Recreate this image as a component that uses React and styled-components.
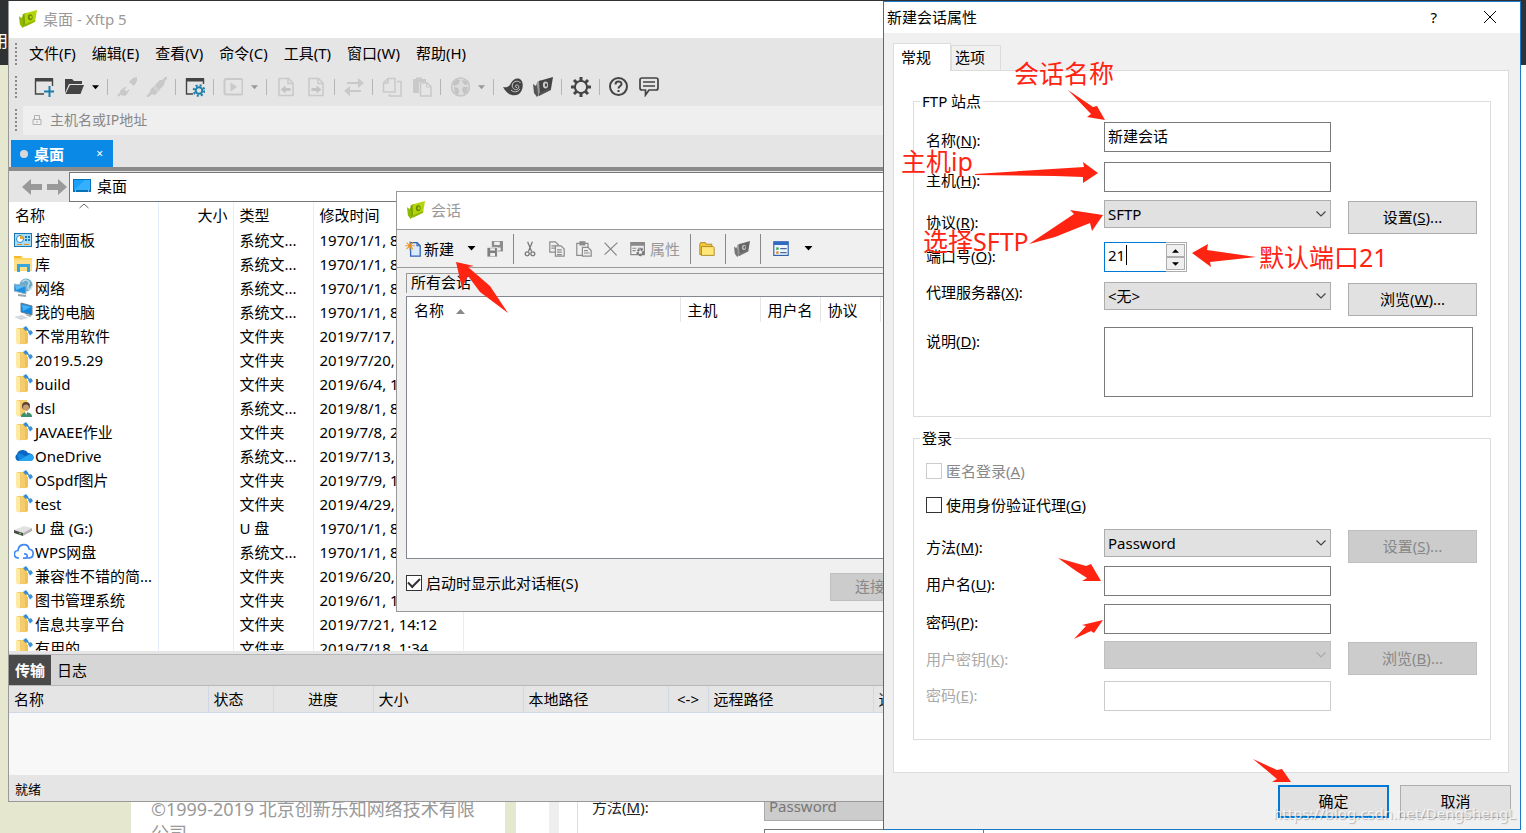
import React from "react";
import styled, { createGlobalStyle, css } from "styled-components";

const GlobalStyle = createGlobalStyle`
  * {
    box-sizing: border-box;
  }
  body {
    margin: 0;
    font-family: "Noto Sans", "Noto Sans CJK SC", sans-serif;
    font-size: 15px;
    line-height: 20px;
    color: #000;
  }
  button, input, select, textarea {
    font: inherit;
    color: inherit;
    border-radius: 0;
    outline: none;
  }
  table {
    border-collapse: collapse;
    table-layout: fixed;
    width: 100%;
  }
  th, td {
    padding: 0;
    font-weight: normal;
    text-align: left;
    white-space: nowrap;
  }
`;

/* ---------- icons ---------- */

const Svg = ({ size = 20, children, ...rest }) => (
  <svg width={size} height={size} viewBox="0 0 20 20" fill="none" {...rest}>
    {children}
  </svg>
);

const XftpLogo = ({ size = 18, light = "#b5d40b", mid = "#8fb800", dark = "#79a300", mark = "#5f8a00" }) => (
  <Svg size={size}>
    <path d="M0 7l3 2 1-3 2 12-2 2-3-4z" fill={mid} />
    <path d="M4 5l4-2-1 14-2 1z" fill={dark} />
    <path d="M6 4l14-4-2 12-11 5z" fill={light} />
    <path d="M6 16l12-5v2L6 19z" fill={mid} />
    <ellipse cx="12.500" cy="8" rx="2.600" ry="3.400" fill={mark} />
    <ellipse cx="13" cy="8" rx="1.200" ry="1.800" fill={light} />
  </Svg>
);

const NewWindowIcon = () => (
  <Svg>
    <path d="M10 17H1.5V2H18.5V9" stroke="#444" strokeWidth="1.4" />
    <path d="M1 1h18v3.500H1z" fill="#444" />
    <path d="M15.500 9v11M10 14.500h10" stroke="#1c7eaa" strokeWidth="2" />
  </Svg>
);

const OpenFolderIcon = () => (
  <Svg>
    <path d="M1 16V2h7l2 2h8v3H5z" fill="#444" />
    <path d="M6 8h14l-3.500 9H1.500z" fill="#444" />
    <path d="M5.500 7.500H19" stroke="#e5e5e5" strokeWidth="1" />
  </Svg>
);

const UnplugIcon = () => (
  <Svg>
    <path d="M1 19l3-3" stroke="#c8c8c8" strokeWidth="2" />
    <path d="M3 14l3-3 5 5-3 3-4-1z" fill="#c8c8c8" />
    <path d="M7 12l2-2M10 15l2-2" stroke="#c8c8c8" strokeWidth="1.6" />
    <path d="M16 1l4-1v4l-3 5-5-4z" fill="#c8c8c8" />
  </Svg>
);

const PlugIcon = () => (
  <Svg>
    <path d="M0 20l5-5M15 5l5-5" stroke="#c8c8c8" strokeWidth="2.500" />
    <path d="M3 13l3-3 5 5-3 3-4-1z" fill="#c8c8c8" />
    <path d="M8 8l5-5 5 0-1 5-5 5z" fill="#c8c8c8" />
    <path d="M7 9l5 5" stroke="#c8c8c8" strokeWidth="1.400" />
  </Svg>
);

const WindowGearIcon = () => (
  <Svg>
    <path d="M8 17H1.500V2H18.500V7" stroke="#444" strokeWidth="1.4" />
    <path d="M1 1h18v3.500H1z" fill="#444" />
    <circle cx="14" cy="13.500" r="3.300" stroke="#1c7eaa" strokeWidth="2" />
    <circle cx="14" cy="13.500" r="5.300" stroke="#1c7eaa" strokeWidth="2" strokeDasharray="2.100 2.060" />
  </Svg>
);

const PlayIcon = () => (
  <Svg>
    <rect x="1.500" y="2" width="18" height="15.500" rx="2" stroke="#c9c9c9" strokeWidth="2" />
    <path d="M7.500 5.500v9l6.500-4.500z" fill="#c9c9c9" />
  </Svg>
);

const PageIcon = ({ flip }) => (
  <Svg>
    <path d="M3 1.500h9.500l4.500 4.500v12.500H3z" stroke="#cacaca" strokeWidth="1.600" />
    <path d="M12 1.500V6.500h5" stroke="#cacaca" strokeWidth="1.400" />
    <path
      d={flip ? "M5.500 11h5V8.500l5 4-5 4V14h-5z" : "M14.500 11h-5V8.500l-5 4 5 4V14h5z"}
      fill="#c4c4c4"
    />
  </Svg>
);

const SwapIcon = () => (
  <Svg>
    <path d="M3 6h12M5 14h12" stroke="#c9c9c9" strokeWidth="2" />
    <path d="M14 1l6 5-6 5zM6 9l-6 5 6 5z" fill="#c9c9c9" />
  </Svg>
);

const CopyPagesIcon = () => (
  <Svg>
    <path d="M6 1.500h7V15H1.500V6zM6 1.500V6H1.500" stroke="#c9c9c9" strokeWidth="1.500" />
    <path d="M15 4.500h4V19H7.500v-2" stroke="#c9c9c9" strokeWidth="1.500" />
  </Svg>
);

const PastePagesIcon = () => (
  <Svg>
    <path d="M1 2h3V0.500h6V2h4v3H7v11H1z" fill="#c9c9c9" />
    <path d="M8.500 6h6.500l4 3.500V19H8.500z" stroke="#c9c9c9" strokeWidth="1.500" fill="#e5e5e5" />
    <path d="M14.500 6v4H19" stroke="#c9c9c9" />
  </Svg>
);

const GlobeIcon = () => (
  <Svg>
    <circle cx="10.500" cy="10" r="9" stroke="#c6c6c6" strokeWidth="1.500" fill="#dcdcdc" />
    <path d="M3 6l4-4 3 1-1 3-2 2-3 1zM4 10l4 1 1 3-1 4-3-2zM12 3l4 1 2 3-3 1-2-2zM13 10l5 0-1 5-3 2-2-4z" fill="#c3c3c3" />
  </Svg>
);

const ShellIcon = () => (
  <Svg>
    <path d="M0 10c3 1 6 0 8-4 2-4 7-6 10-3s2 11-2 14c-5 3-12 1-16-7z" fill="#444" />
    <path
      d="M17.500 6c-2-3-7-2-8 1s1 6 4 5.500 3-4.500.5-4.500-2 3 0 2.500M8 13c3 3 7 2 9-1"
      stroke="#c9c9c9"
      strokeWidth="1"
    />
  </Svg>
);

const GearIcon = () => (
  <Svg>
    <circle cx="10" cy="10" r="6" stroke="#444" strokeWidth="2.200" />
    <path
      d="M10 0v4M10 16v4M0 10h4M16 10h4M3 3l3 3M14 14l3 3M3 17l3-3M14 6l3-3"
      stroke="#444"
      strokeWidth="3"
    />
    <circle cx="10" cy="10" r="4.800" fill="#e5e5e5" />
  </Svg>
);

const HelpIcon = () => (
  <Svg>
    <circle cx="9.500" cy="9.500" r="8.500" stroke="#444" strokeWidth="2" />
    <path d="M6.500 7.500c0-4 6-4 6-.5 0 2-3 2-3 4.500M9.500 13v2" stroke="#444" strokeWidth="2" />
  </Svg>
);

const ChatIcon = () => (
  <Svg>
    <path
      d="M3 1h14c1.500 0 2 .5 2 2v8c0 1.500-.5 2-2 2h-7l-3.500 5v-5H3c-1.500 0-2-.5-2-2V3c0-1.500.5-2 2-2z"
      stroke="#444"
      strokeWidth="1.700"
    />
    <path d="M4 5h12M4 9h12" stroke="#444" strokeWidth="1.400" />
  </Svg>
);

const Triangle = ({ color = "#000", w = 7 }) => (
  <svg width={w} height="5" viewBox="0 0 8 5">
    <path d="M0 0h8L4 4.500z" fill={color} />
  </svg>
);

const LockIcon = () => (
  <svg width="10" height="12" viewBox="0 0 10 12" fill="none" stroke="#b0b0b0">
    <path d="M1 5.500h8v5H1zM2.500 5V1.500h5V5M5 7v2" />
  </svg>
);

const BackIcon = ({ flip }) => (
  <svg width="20" height="18" viewBox="0 0 20 18">
    <path
      d={flip ? "M20 9l-9-8v5H0v6h11v5z" : "M0 9l9-8v5h11v6H9v5z"}
      fill="#999"
    />
  </svg>
);

const MonitorIcon = () => (
  <svg width="18" height="14" viewBox="0 0 18 14">
    <rect width="18" height="13" fill="#0671b5" />
    <path d="M1 1h16v10H1z" fill="#18a0fb" />
    <path d="M1 11L12 1h5v10z" fill="#35b0ff" />
    <path d="M2 12h1M15 12h1" stroke="#fff" />
  </svg>
);

const FolderShape = () => (
  <>
    <path d="M3 2h10v16H3z" fill="#f4cd6a" />
    <path d="M2 2l4 1.500V19l-4-2z" fill="#ffe9a6" />
    <path d="M11 6l3 1v10l-3 1z" fill="#eec25a" />
  </>
);

const FileIcon = ({ kind }) => {
  switch (kind) {
    case "panel":
      return (
        <Svg>
          <rect x="0.500" y="3.500" width="17" height="13" fill="#a5dcf8" stroke="#1b78b5" />
          <circle cx="6" cy="9" r="3.500" fill="#fff" stroke="#2a8ccc" />
          <path d="M6 9V5.500A3.500 3.500 0 0 1 9.500 9z" fill="#f5a623" />
          <path d="M11 7h2M11 10h2M14 7h2M14 10h2" stroke="#1b78b5" strokeWidth="2" />
          <path d="M3 14.500h5M10 14.500h5" stroke="#e98b1f" />
        </Svg>
      );
    case "library":
      return (
        <Svg>
          <path d="M0 2h8l1 2h9v13H0z" fill="#ffd766" />
          <path d="M0 2h7v2H0z" fill="#f3b92c" />
          <path d="M0 6h18v10H0z" fill="#ffe08a" />
          <path d="M3 18v-8h13v8h-3v-5H6v5z" fill="#35a7dd" />
        </Svg>
      );
    case "network":
      return (
        <Svg>
          <circle cx="12" cy="7" r="6.500" fill="#6da9c9" />
          <path d="M8 4c3-3 6-2 7 0s-2 3-1 6 3 1 4-2" stroke="#b9dcec" strokeWidth="1.500" />
          <path d="M0 6l12 2v8L0 13z" fill="#1d8fdd" stroke="#9fb4c2" />
          <path d="M1 7l10 1.500L2 12z" fill="#5dbcf5" />
          <path d="M4 17l8 1" stroke="#9aa5ac" strokeWidth="2" />
        </Svg>
      );
    case "computer":
      return (
        <Svg>
          <path d="M7 1l11 3v9L7 10z" fill="#1287dc" stroke="#6f7f8c" />
          <path d="M8 2.500l9 2.500-8 4z" fill="#45b2f7" />
          <path d="M0 15l8-2 6 3-7 2z" fill="#d3d9de" />
          <path d="M11 12l6 1v2l-4-1z" fill="#a7afb5" />
        </Svg>
      );
    case "user":
      return (
        <Svg>
          <FolderShape />
          <circle cx="12" cy="8" r="4" fill="#5b4334" />
          <circle cx="12" cy="9.500" r="3" fill="#c79a78" />
          <path d="M7 19c0-6 10-6 11-1v1z" fill="#3f8f6f" />
          <path d="M11 13l1 4 2-4z" fill="#fff" />
        </Svg>
      );
    case "onedrive":
      return (
        <Svg>
          <path d="M4 15a4 4 0 0 1-1-7c1-4 8-6 11-1 4 0 6 3 5 6z" fill="#0a66c2" />
          <path d="M3 8c3-1 5 0 8 2l7-2c3 3 2 7-2 7H5z" fill="#1683dc" />
          <path d="M4 15l12-7c4 1 5 6 1 7z" fill="#27a5ee" />
        </Svg>
      );
    case "usb":
      return (
        <Svg>
          <path d="M0 12l10-4 8 2-9 5z" fill="#e2e2e2" />
          <path d="M0 12l9 3v3l-9-3z" fill="#4a4a4a" />
          <path d="M9 15l9-5v3l-9 5z" fill="#b5b5b5" />
          <path d="M5 15.500h2" stroke="#5cd04a" strokeWidth="1.500" />
        </Svg>
      );
    case "wps":
      return (
        <Svg>
          <path
            d="M5 16C-1 16-1 9 4 8.500 5 1 14 1 15 7c6 1 5 9 0 9H9M9 16c6 1 5-5 1-4"
            stroke="#3f86f7"
            strokeWidth="1.700"
          />
        </Svg>
      );
    default:
      return (
        <Svg>
          <FolderShape />
          <path d="M9 2l3-2 2.500 3-3 2z" fill="#3a8fd6" />
          <path d="M14 6l3-2 2 3-3 2.500z" fill="#3a8fd6" />
          <path d="M12 2.500l4 3.500" stroke="#3a8fd6" strokeWidth="1.500" />
        </Svg>
      );
  }
};

const NewDocIcon = () => (
  <Svg size={16}>
    <path d="M7 2h8l4 4v13H7z" fill="#dceafd" stroke="#2f62b5" strokeWidth="1.600" />
    <path d="M15 2v4h4" stroke="#2f62b5" strokeWidth="1.400" />
    <path d="M6 0v12M0 6h12M2 2l8 8M10 2l-8 8" stroke="#e8a33a" strokeWidth="1.400" />
    <circle cx="6" cy="6" r="2" fill="#f08b1d" />
  </Svg>
);

const SaveAllIcon = () => (
  <Svg size={16}>
    <path d="M6 0h14v13H6z" fill="#8c8c8c" />
    <path d="M9 1h7v4H9zM12 8h5v4h-5z" fill="#efefef" />
    <path d="M0 8h13v12H0z" fill="#808080" stroke="#efefef" />
    <path d="M4 9h6v3H4zM4 15h6v4H4z" fill="#efefef" />
  </Svg>
);

const CutIcon = () => (
  <Svg size={16} stroke="#777" strokeWidth="1.600">
    <path d="M7 1l5 12M13 1L8 13" />
    <circle cx="6.500" cy="16" r="2.500" />
    <circle cx="13.500" cy="16" r="2.500" />
  </Svg>
);

const CopyIcon = () => (
  <Svg size={16} stroke="#8c8c8c" strokeWidth="1.500">
    <path d="M1 1h7l4 4v9H1zM3 6h6M3 9h6" />
    <path d="M8 6h7l4 4v9H8z" fill="#efefef" />
    <path d="M10 11h6M10 14h6M10 17h6" />
  </Svg>
);

const PasteIcon = () => (
  <Svg size={16} stroke="#8c8c8c" strokeWidth="1.500">
    <path d="M1 3h14v15H1z" />
    <path d="M5 1h6v4H5z" fill="#8c8c8c" />
    <path d="M8 8h7l4 4v7H8z" fill="#efefef" />
    <path d="M10 12h5M10 15h7" />
  </Svg>
);

const DeleteIcon = () => (
  <Svg size={16} stroke="#888" strokeWidth="1.600">
    <path d="M2 2l15 16M18 2L2 17" />
  </Svg>
);

const PropsIcon = () => (
  <Svg size={16}>
    <path d="M1 2h17v15H1z" stroke="#8a8a8a" strokeWidth="1.500" />
    <path d="M1 2h17v4H1z" fill="#8a8a8a" />
    <path d="M3 9h5M3 12h4M10 9h6" stroke="#8a8a8a" strokeWidth="1.400" />
    <circle cx="13" cy="14" r="3.500" stroke="#7a7a7a" strokeWidth="3" strokeDasharray="3 1" />
  </Svg>
);

const SmallFolderIcon = () => (
  <Svg size={16}>
    <path d="M1 4l1-2h6l1 2h7v13H1z" fill="#f3c93c" stroke="#a37a10" />
    <path d="M3 7h15l1 1v10H3z" fill="#ffe679" stroke="#a37a10" />
  </Svg>
);

const ListIcon = () => (
  <Svg size={16}>
    <rect x="1" y="1" width="18" height="17" fill="#eef4fc" stroke="#2a5ba8" strokeWidth="1.400" />
    <path d="M1 1h18v4H1z" fill="#2f6bc4" />
    <path d="M4 8h3v3H4z" fill="#3aa545" />
    <path d="M4 13h3v3H4z" fill="#e3842a" />
    <path d="M9 9.500h8M9 14.500h8" stroke="#44699c" strokeWidth="1.500" />
  </Svg>
);

const Chevron = ({ color = "#444" }) => (
  <svg width="10" height="6" viewBox="0 0 10 6" fill="none">
    <path d="M0.500 0.500L5 5l4.500-4.500" stroke={color} strokeWidth="1.200" />
  </svg>
);

/* ---------- desktop and the page behind ---------- */

const Desktop = styled.div`
  position: relative;
  min-height: 100vh;
  overflow: hidden;
  background: #fff;
`;

const Backdrop = styled.div`
  position: absolute;
  inset: 0;
  display: flex;
  flex-direction: column;
`;

const BackdropBar = styled.div`
  height: 65px;
  padding-top: 31px;
  text-indent: -8px;
  font-size: 16px;
  color: #fff;
  background: #2f3133;
`;

const BackdropBody = styled.div`
  flex: 1;
  display: grid;
  grid-template-columns: 131px 374px 11px 33px 10px 19px 1fr;
  align-items: stretch;
  background: #fff;
`;

const Beige = styled.div`
  background: #e5e8cf;
`;

const Band = styled.div`
  background: #eee;
`;

const BlankStrip = styled.div`
  border-right: 1px solid #ddd;
`;

const Copyright = styled.p`
  align-self: end;
  height: 36px;
  margin: 0;
  padding: 0 20px;
  font-size: 18px;
  line-height: 24px;
  color: #999;
  overflow: hidden;
`;

const GhostForm = styled.div`
  align-self: end;
  display: grid;
  grid-template-columns: 172px 220px;
  align-items: start;
  row-gap: 8px;
  height: 38px;
  padding-left: 14px;
  overflow: hidden;
  color: #222;
`;

const GhostSelect = styled.div`
  height: 26px;
  padding-left: 4px;
  border: 1px solid #aaa;
  background: #ccc;
  color: #777;
`;

const GhostInput = styled.div`
  grid-column: 2;
  height: 20px;
  border: 1px solid #777;
`;

const GhostLabel = styled.span`
  padding-top: 2px;
`;

/* ---------- main Xftp window ---------- */

const MainWindow = styled.section`
  position: absolute;
  top: 1px;
  left: 8px;
  right: 200px;
  bottom: 31px;
  display: flex;
  flex-direction: column;
  border: 1px solid #999;
  border-top: none;
  background: #e5e5e5;
`;

const TitleBar = styled.header`
  flex: none;
  display: flex;
  align-items: center;
  gap: 6px;
  height: 37px;
  padding: 0 0 2px 10px;
  background: #fff;
  color: #999;
`;

const BarRow = styled.div`
  flex: none;
  display: flex;
  align-items: center;
  height: ${(props) => props.$height}px;
`;

const Grip = styled.span`
  width: 2px;
  height: 23px;
  margin-left: 6px;
  background: repeating-linear-gradient(#8a8a8a 0 2px, transparent 2px 4px);
`;

const Menu = styled.nav`
  display: flex;
  gap: 16px;
  margin-left: 12px;
  padding-bottom: 2px;
`;

const PlainButton = styled.button`
  display: flex;
  align-items: center;
  gap: ${(props) => props.$gap || 0}px;
  padding: 0;
  border: none;
  background: none;
  white-space: nowrap;
`;

const Tools = styled.div`
  display: flex;
  align-items: center;
  margin-left: 8px;
`;

const ToolGroup = styled.div`
  display: flex;
  align-items: center;
  gap: 10px;
  height: 16px;
  padding: 0 8px 0 9px;
  border-right: 1px solid #b5b5b5;

  &:last-child {
    border-right: none;
  }
`;

const HostBox = styled.label`
  flex: 1;
  display: flex;
  align-items: center;
  gap: 8px;
  height: 29px;
  margin-left: 6px;
  padding-left: 9px;
  background: #efefef;
`;

const HostInput = styled.input`
  flex: 1;
  padding: 0;
  border: none;
  background: none;
  font-size: 14px;

  &::placeholder {
    color: #888;
    opacity: 1;
  }
`;

const TabStrip = styled.div`
  flex: none;
  height: 35px;
  padding: 4px 2px 0;
  border-bottom: 4px solid #8b8b8b;
`;

const SiteTab = styled.button`
  display: flex;
  align-items: center;
  gap: 6px;
  width: 102px;
  height: 27px;
  padding: 0 10px 0 9px;
  border: none;
  background: #0a8ae6;
  color: #fff;
  font-weight: bold;
`;

const Dot = styled.span`
  width: 8px;
  height: 8px;
  border-radius: 50%;
  background: #d8d8d8;
`;

const CloseMark = styled.span`
  margin-left: auto;
  font-size: 12px;
  font-weight: normal;
`;

const PathRow = styled.div`
  flex: none;
  display: flex;
  align-items: center;
  gap: 5px;
  height: 31px;
  padding: 1px 0 0 13px;
`;

const PathBox = styled.div`
  flex: 1;
  display: flex;
  align-items: center;
  gap: 6px;
  height: 30px;
  margin-left: -3px;
  padding: 0 0 2px 3px;
  border: 1px solid #777;
  background: #fff;
`;

const FileList = styled.div`
  flex: 1;
  min-height: 0;
  overflow: hidden;
  background: #fff;

  td, th {
    height: 24px;
    line-height: 24px;
    padding-left: 6px;
    border-right: 1px solid #e4eefa;
    overflow: hidden;
  }
  th {
    height: 26px;
    position: relative;
  }
  th:nth-child(2) {
    padding-right: 5px;
    text-align: right;
  }
  td:first-child {
    padding-left: 5px;
  }
`;

const SortMark = styled.svg`
  position: absolute;
  top: 1px;
  left: 70px;
`;

const NameCell = styled.span`
  display: flex;
  align-items: center;
  gap: 1px;
  height: 24px;

  svg {
    flex: none;
  }
`;

const LogTabs = styled.div`
  flex: none;
  display: flex;
  height: 32px;
  margin-top: 3px;
  border-top: 1px solid #b8b8b8;
  border-bottom: 1px solid #b8b8b8;
  background: #d6d6d6;
`;

const LogTab = styled.button`
  padding: 0 6px;
  border: none;
  background: ${(props) => (props.$active ? "#4a4a4a" : "none")};
  color: ${(props) => (props.$active ? "#fff" : "#000")};
  font-weight: ${(props) => (props.$active ? "bold" : "normal")};
`;

const TransferPane = styled.div`
  flex: none;
  height: 89px;
  background: #f8f8f8;

  th {
    height: 26px;
    padding-left: 5px;
    border-right: 1px solid #d0d8e6;
    border-bottom: 1px solid #d0d8e6;
    background: #e5e5e5;
    overflow: hidden;
  }
  th:nth-child(3), th:nth-child(6) {
    padding: 0;
    text-align: center;
  }
`;

const StatusBar = styled.footer`
  flex: none;
  height: 26px;
  padding-left: 6px;
  font-size: 13px;
  line-height: 28px;
`;

/* ---------- sessions window ---------- */

const SessionWindow = styled.section`
  position: absolute;
  top: 191px;
  left: 396px;
  right: 300px;
  border: 1px solid #999;
  background: #f0f0f0;
`;

const SessionTools = styled.div`
  display: flex;
  align-items: center;
  height: 39px;
  border-top: 1px solid #999;
  border-bottom: 1px solid #999;
`;

const SessionGroup = styled.div`
  display: flex;
  align-items: center;
  gap: 11px;
  height: 30px;
  padding: 0 10px 0 ${(props) => (props.$wide ? 12 : 8)}px;
  border-right: 1px solid #888;
  color: ${(props) => (props.$muted ? "#999" : "#000")};

  &:last-child {
    border-right: none;
  }
`;

const NewLabel = styled.span`
  margin-right: 10px;
`;

const AllSessions = styled.div`
  height: 20px;
  margin: 5px 0 3px 9px;
  padding-left: 4px;
  border-top: 1px solid #999;
  border-left: 1px solid #999;
  line-height: 16px;
`;

const SessionList = styled.div`
  height: 263px;
  margin-left: 9px;
  border: 1px solid #828790;
  background: #fff;

  th {
    height: 25px;
    padding-left: 7px;
    border-right: 1px solid #e5e5e5;
  }
  th svg {
    margin-left: 12px;
    vertical-align: middle;
  }
`;

const SessionFooter = styled.div`
  display: flex;
  align-items: center;
  height: 52px;
  padding-left: 9px;
  padding-bottom: 4px;
`;

const Check = styled.input.attrs({ type: "checkbox" })`
  appearance: none;
  display: grid;
  place-items: center;
  width: 16px;
  height: 16px;
  margin: 0;
  border: 1px solid #333;
  background: #fff;

  &:disabled {
    border-color: #ccc;
  }
  &:checked::after {
    content: "";
    width: 10px;
    height: 5px;
    margin-bottom: 4px;
    border: solid #333;
    border-width: 0 0 2px 2px;
    rotate: -45deg;
  }
`;

const CheckLabel = styled.label`
  display: flex;
  align-items: center;
  gap: 4px;
  color: ${(props) => (props.$muted ? "#888" : "#000")};
`;

const StartupCheck = styled(CheckLabel)`
  width: 424px;
`;

const LoginCheck = styled(CheckLabel)`
  height: 20px;
  margin-bottom: 14px;
`;

const buttonLook = css`
  border: 1px solid #adadad;
  background: #e1e1e1;

  &:disabled {
    border-color: #bfbfbf;
    background: #ccc;
    color: #888;
  }
`;

const ConnectButton = styled.button`
  ${buttonLook}
  width: 80px;
  height: 28px;
  margin-top: 8px;
  padding: 0 0 2px;
`;

/* ---------- session properties dialog ---------- */

const Dialog = styled.section`
  position: absolute;
  top: 1px;
  right: 5px;
  bottom: 3px;
  width: 638px;
  display: flex;
  flex-direction: column;
  border: 1px solid #1979ca;
  background: #f0f0f0;
`;

const DialogTitle = styled.header`
  display: flex;
  align-items: center;
  height: 31px;
  padding: 0 24px 2px 3px;
  background: #fff;
`;

const TitleButtons = styled.div`
  display: flex;
  align-items: center;
  gap: 47px;
  margin-left: auto;
`;

const DialogTabs = styled.div`
  display: flex;
  align-items: flex-end;
  height: 37px;
  padding-left: 9px;
`;

const DialogTab = styled.button`
  z-index: ${(props) => (props.$active ? 1 : 0)};
  width: ${(props) => (props.$active ? 58 : 50)}px;
  height: ${(props) => (props.$active ? 28 : 25)}px;
  margin-bottom: ${(props) => (props.$active ? -1 : 0)}px;
  padding: 0 0 2px ${(props) => (props.$active ? 7 : 3)}px;
  border: 1px solid #dcdcdc;
  border-bottom: none;
  background: ${(props) => (props.$active ? "#fff" : "#f0f0f0")};
  text-align: left;
`;

const Pane = styled.div`
  flex: 1;
  margin: 0 11px 0 9px;
  padding: 20px 17px 0 19px;
  border: 1px solid #dcdcdc;
  background: #fff;
`;

const Group = styled.fieldset`
  min-width: 0;
  height: ${(props) => props.$height}px;
  margin: 0 0 11px;
  padding: ${(props) => props.$top}px 0 0 12px;
  border: 1px solid #dcdcdc;

  legend {
    margin-left: -6px;
    padding: 0 2px;
    white-space: nowrap;
  }
`;

const Row = styled.div`
  display: grid;
  grid-template-columns: 178px 227px 129px;
  align-items: start;
  height: ${(props) => props.$height}px;

  > :nth-child(3) {
    margin-left: 17px;
  }
`;

const FieldLabel = styled.label`
  padding-top: ${(props) => props.$drop}px;
  color: ${(props) => (props.$muted ? "#aaa" : "#000")};
`;

const TextBox = styled.input`
  width: 100%;
  height: 30px;
  padding: 0 3px 4px;
  border: 1px solid #7a7a7a;
  background: #fff;

  &:disabled {
    border-color: #ccc;
  }
`;

const DropWrap = styled.div`
  display: grid;
  align-items: center;

  > * {
    grid-area: 1 / 1;
  }
  svg {
    justify-self: end;
    margin-right: 5px;
    pointer-events: none;
  }
`;

const DropDown = styled.select`
  ${buttonLook}
  appearance: none;
  width: 100%;
  height: 28px;
  padding: 0 3px;
  opacity: 1;
`;

const SideButton = styled.button`
  ${buttonLook}
  width: 129px;
  height: 33px;
  margin-top: 1px;
  padding: 0 0 2px;
`;

const Description = styled.textarea`
  width: 369px;
  height: 70px;
  border: 1px solid #7a7a7a;
  resize: none;
`;

const PortBox = styled.div`
  position: relative;
  display: flex;

  &::after {
    content: "";
    position: absolute;
    top: 3px;
    left: 22px;
    width: 1px;
    height: 20px;
    background: #000;
  }
`;

const PortInput = styled.input`
  width: 62px;
  height: 30px;
  padding: 0 3px 4px;
  border: 1px solid #0078d7;
  border-right: none;
`;

const Spinner = styled.div`
  display: flex;
  flex-direction: column;
  width: 21px;
  height: 30px;
  padding: 1px 1px 1px 0;
  border: 1px solid #adadad;
  border-left: none;
`;

const SpinButton = styled.button`
  flex: 1;
  display: grid;
  place-items: center;
  padding: 0;
  border: 1px solid #adadad;
  background: #efefef;
`;

const DialogFooter = styled.footer`
  display: flex;
  justify-content: flex-end;
  gap: 11px;
  height: 56px;
  padding: 12px 9px 0 0;
`;

const FooterButton = styled.button`
  width: 111px;
  height: 33px;
  padding: 0 0 2px;
  border: ${(props) => (props.$primary ? "2px solid #0078d7" : "1px solid #adadad")};
  background: #e1e1e1;
`;

/* ---------- red notes over the windows ---------- */

const Arrows = styled.svg`
  position: absolute;
  top: 0;
  left: 0;
  fill: #ff2412;
  pointer-events: none;
`;

const Note = styled.span`
  position: absolute;
  top: ${(props) => props.$top}px;
  left: ${(props) => props.$left}px;
  font-size: 25px;
  line-height: 30px;
  white-space: nowrap;
  color: #ff2412;
`;

const Watermark = styled.span`
  position: absolute;
  right: 4px;
  bottom: 6px;
  font-size: 15px;
  line-height: 20px;
  color: rgba(255, 255, 255, 0.75);
  text-shadow: 1px 1px 1px rgba(0, 0, 0, 0.25);
  pointer-events: none;
`;

/* ---------- data ---------- */

const menus = ["文件(F)", "编辑(E)", "查看(V)", "命令(C)", "工具(T)", "窗口(W)", "帮助(H)"];

const files = [
  ["panel", "控制面板", "系统文...", "1970/1/1, 8:00"],
  ["library", "库", "系统文...", "1970/1/1, 8:00"],
  ["network", "网络", "系统文...", "1970/1/1, 8:00"],
  ["computer", "我的电脑", "系统文...", "1970/1/1, 8:00"],
  ["folder", "不常用软件", "文件夹", "2019/7/17, 9:20"],
  ["folder", "2019.5.29", "文件夹", "2019/7/20, 9:20"],
  ["folder", "build", "文件夹", "2019/6/4, 11:20"],
  ["user", "dsl", "系统文...", "2019/8/1, 8:20"],
  ["folder", "JAVAEE作业", "文件夹", "2019/7/8, 21:20"],
  ["onedrive", "OneDrive", "系统文...", "2019/7/13, 9:20"],
  ["folder", "OSpdf图片", "文件夹", "2019/7/9, 11:20"],
  ["folder", "test", "文件夹", "2019/4/29, 9:20"],
  ["usb", "U 盘 (G:)", "U 盘", "1970/1/1, 8:00"],
  ["wps", "WPS网盘", "系统文...", "1970/1/1, 8:00"],
  ["folder", "兼容性不错的简...", "文件夹", "2019/6/20, 9:20"],
  ["folder", "图书管理系统", "文件夹", "2019/6/1, 11:20"],
  ["folder", "信息共享平台", "文件夹", "2019/7/21, 14:12"],
  ["folder", "有用的", "文件夹", "2019/7/18, 1:34"],
];

const Cols = ({ widths }) => (
  <colgroup>
    {widths.map((w, i) => (
      <col key={i} width={w} />
    ))}
    <col />
  </colgroup>
);

const Key = ({ text, k, end = ":" }) => (
  <>
    {text}(<u>{k}</u>){end}
  </>
);

const Field = ({ id, text, k, height, drop = 8, muted, children }) => (
  <Row $height={height}>
    <FieldLabel htmlFor={id} $drop={drop} $muted={muted}>
      <Key text={text} k={k} />
    </FieldLabel>
    {children}
  </Row>
);

const Drop = ({ id, value, disabled }) => (
  <DropWrap>
    <DropDown id={id} disabled={disabled}>
      <option>{value}</option>
    </DropDown>
    <Chevron color={disabled ? "#aaa" : "#444"} />
  </DropWrap>
);

const Tool = ({ label, children, drop }) => (
  <PlainButton aria-label={label} $gap={8}>
    {children}
    {drop && <Triangle color={drop} />}
  </PlainButton>
);

const Xftp = () => (
  <MainWindow>
    <TitleBar>
      <XftpLogo />
      桌面 - Xftp 5
    </TitleBar>
    <BarRow $height={32}>
      <Grip />
      <Menu>
        {menus.map((m) => (
          <PlainButton key={m}>{m}</PlainButton>
        ))}
      </Menu>
    </BarRow>
    <BarRow $height={34}>
      <Grip />
      <Tools>
        <ToolGroup>
          <Tool label="新建"><NewWindowIcon /></Tool>
          <Tool label="打开" drop="#000"><OpenFolderIcon /></Tool>
        </ToolGroup>
        <ToolGroup>
          <Tool label="断开"><UnplugIcon /></Tool>
          <Tool label="重新连接"><PlugIcon /></Tool>
        </ToolGroup>
        <ToolGroup>
          <Tool label="属性"><WindowGearIcon /></Tool>
        </ToolGroup>
        <ToolGroup>
          <Tool label="运行" drop="#999"><PlayIcon /></Tool>
        </ToolGroup>
        <ToolGroup>
          <Tool label="下载"><PageIcon /></Tool>
          <Tool label="上传"><PageIcon flip /></Tool>
        </ToolGroup>
        <ToolGroup>
          <Tool label="同步"><SwapIcon /></Tool>
        </ToolGroup>
        <ToolGroup>
          <Tool label="复制"><CopyPagesIcon /></Tool>
          <Tool label="粘贴"><PastePagesIcon /></Tool>
        </ToolGroup>
        <ToolGroup>
          <Tool label="编码" drop="#999"><GlobeIcon /></Tool>
        </ToolGroup>
        <ToolGroup>
          <Tool label="Xshell"><ShellIcon /></Tool>
          <Tool label="Xftp">
            <XftpLogo size={20} light="#444" mid="#555" dark="#999" mark="#ccc" />
          </Tool>
        </ToolGroup>
        <ToolGroup>
          <Tool label="选项"><GearIcon /></Tool>
        </ToolGroup>
        <ToolGroup>
          <Tool label="帮助"><HelpIcon /></Tool>
          <Tool label="反馈"><ChatIcon /></Tool>
        </ToolGroup>
      </Tools>
    </BarRow>
    <BarRow $height={32}>
      <Grip />
      <HostBox>
        <LockIcon />
        <HostInput placeholder="主机名或IP地址" />
      </HostBox>
    </BarRow>
    <TabStrip>
      <SiteTab>
        <Dot />
        桌面
        <CloseMark>×</CloseMark>
      </SiteTab>
    </TabStrip>
    <PathRow>
      <BackIcon />
      <BackIcon flip />
      <PathBox>
        <MonitorIcon />
        桌面
      </PathBox>
    </PathRow>
    <FileList>
      <table>
        <Cols widths={[149, 75, 80, 150]} />
        <thead>
          <tr>
            <th>
              名称
              <SortMark width="10" height="6" viewBox="0 0 10 6" fill="none">
                <path d="M0.500 5L5 1l4.500 4" stroke="#666" />
              </SortMark>
            </th>
            <th>大小</th>
            <th>类型</th>
            <th>修改时间</th>
            <th></th>
          </tr>
        </thead>
        <tbody>
          {files.map(([kind, name, type, date]) => (
            <tr key={name}>
              <td>
                <NameCell>
                  <FileIcon kind={kind} />
                  {name}
                </NameCell>
              </td>
              <td></td>
              <td>{type}</td>
              <td>{date}</td>
              <td></td>
            </tr>
          ))}
        </tbody>
      </table>
    </FileList>
    <LogTabs>
      <LogTab $active>传输</LogTab>
      <LogTab>日志</LogTab>
    </LogTabs>
    <TransferPane>
      <table>
        <Cols widths={[199, 65, 100, 150, 145, 40, 165]} />
        <thead>
          <tr>
            <th>名称</th>
            <th>状态</th>
            <th>进度</th>
            <th>大小</th>
            <th>本地路径</th>
            <th>&lt;-&gt;</th>
            <th>远程路径</th>
            <th>速度</th>
          </tr>
        </thead>
      </table>
    </TransferPane>
    <StatusBar>就绪</StatusBar>
  </MainWindow>
);

const Sessions = () => (
  <SessionWindow>
    <TitleBar>
      <XftpLogo />
      会话
    </TitleBar>
    <SessionTools>
      <SessionGroup>
        <PlainButton $gap={3}>
          <NewDocIcon />
          <NewLabel>新建</NewLabel>
          <Triangle w={9} />
        </PlainButton>
        <PlainButton aria-label="保存"><SaveAllIcon /></PlainButton>
      </SessionGroup>
      <SessionGroup $muted>
        <PlainButton aria-label="剪切"><CutIcon /></PlainButton>
        <PlainButton aria-label="复制"><CopyIcon /></PlainButton>
        <PlainButton aria-label="粘贴"><PasteIcon /></PlainButton>
        <PlainButton aria-label="删除"><DeleteIcon /></PlainButton>
        <PlainButton $gap={4}>
          <PropsIcon />
          属性
        </PlainButton>
      </SessionGroup>
      <SessionGroup>
        <PlainButton aria-label="文件夹"><SmallFolderIcon /></PlainButton>
      </SessionGroup>
      <SessionGroup>
        <PlainButton aria-label="Xftp">
          <XftpLogo size={16} light="#666" mid="#777" dark="#999" mark="#bbb" />
        </PlainButton>
      </SessionGroup>
      <SessionGroup $wide>
        <PlainButton aria-label="视图" $gap={15}>
          <ListIcon />
          <Triangle w={9} />
        </PlainButton>
      </SessionGroup>
    </SessionTools>
    <AllSessions>所有会话</AllSessions>
    <SessionList>
      <table>
        <Cols widths={[273, 80, 60, 60]} />
        <thead>
          <tr>
            <th>
              名称
              <svg width="9" height="5" viewBox="0 0 9 5">
                <path d="M0 5h9L4.500 0z" fill="#888" />
              </svg>
            </th>
            <th>主机</th>
            <th>用户名</th>
            <th>协议</th>
            <th></th>
          </tr>
        </thead>
      </table>
    </SessionList>
    <SessionFooter>
      <StartupCheck>
        <Check defaultChecked />
        启动时显示此对话框(S)
      </StartupCheck>
      <ConnectButton disabled>连接</ConnectButton>
    </SessionFooter>
    <Arrows width="130" height="130">
      <path d="M59 70l18 4-6 1 22 19 18 27-28-21-12-16-6 12z" />
    </Arrows>
  </SessionWindow>
);

const Properties = () => (
  <Dialog>
    <DialogTitle>
      新建会话属性
      <TitleButtons>
        <PlainButton>?</PlainButton>
        <PlainButton aria-label="关闭">
          <svg width="12" height="12" viewBox="0 0 12 12" stroke="#000">
            <path d="M0 0l12 12M12 0L0 12" />
          </svg>
        </PlainButton>
      </TitleButtons>
    </DialogTitle>
    <DialogTabs>
      <DialogTab $active>常规</DialogTab>
      <DialogTab>选项</DialogTab>
    </DialogTabs>
    <Pane>
      <Group $height={326} $top={11}>
        <legend>FTP 站点</legend>
        <Field id="name" text="名称" k="N" height={40}>
          <TextBox id="name" defaultValue="新建会话" />
        </Field>
        <Field id="host" text="主机" k="H" height={38}>
          <TextBox id="host" />
        </Field>
        <Field id="protocol" text="协议" k="R" height={42} drop={12}>
          <Drop id="protocol" value="SFTP" />
          <SideButton><Key text="设置" k="S" end="..." /></SideButton>
        </Field>
        <Field id="port" text="端口号" k="O" height={40} drop={4}>
          <PortBox>
            <PortInput id="port" defaultValue="21" />
            <Spinner>
              <SpinButton aria-label="增加">
                <svg width="7" height="4" viewBox="0 0 8 4"><path d="M0 4h8L4 0z" /></svg>
              </SpinButton>
              <SpinButton aria-label="减少">
                <svg width="7" height="4" viewBox="0 0 8 4"><path d="M0 0h8L4 4z" /></svg>
              </SpinButton>
            </Spinner>
          </PortBox>
        </Field>
        <Field id="proxy" text="代理服务器" k="X" height={45} drop={0}>
          <Drop id="proxy" value="<无>" />
          <SideButton><Key text="浏览" k="W" end="..." /></SideButton>
        </Field>
        <Field id="desc" text="说明" k="D" height={70} drop={4}>
          <Description id="desc" />
        </Field>
      </Group>
      <Group $height={312} $top={13}>
        <legend>登录</legend>
        <LoginCheck $muted>
          <Check disabled />
          <span><Key text="匿名登录" k="A" end="" /></span>
        </LoginCheck>
        <LoginCheck>
          <Check />
          <span><Key text="使用身份验证代理" k="G" end="" /></span>
        </LoginCheck>
        <Field id="method" text="方法" k="M" height={37}>
          <Drop id="method" value="Password" />
          <SideButton disabled><Key text="设置" k="S" end="..." /></SideButton>
        </Field>
        <Field id="user" text="用户名" k="U" height={38}>
          <TextBox id="user" />
        </Field>
        <Field id="password" text="密码" k="P" height={37}>
          <TextBox id="password" type="password" />
        </Field>
        <Field id="userkey" text="用户密钥" k="K" height={40} muted>
          <Drop id="userkey" value="" disabled />
          <SideButton disabled><Key text="浏览" k="B" end="..." /></SideButton>
        </Field>
        <Field id="phrase" text="密码" k="E" height={30} drop={4} muted>
          <TextBox id="phrase" type="password" disabled />
        </Field>
      </Group>
    </Pane>
    <DialogFooter>
      <FooterButton $primary>确定</FooterButton>
      <FooterButton>取消</FooterButton>
    </DialogFooter>
    <Arrows width="636" height="827">
      <path d="M184 88l25 17 4-1 8 14-18-3 4-3z" />
      <path d="M91 172l109-7-1-5 15 11-15 10v-6l-28-1-80-1z" />
      <path d="M145 242l45-30-4-4 33 5-11 16-2-8-35 14z" />
      <path d="M308 251l16-9-1 6 49 7-46 5 1 5z" />
      <path d="M174 556l28 8 5-2 10 17-19 0 5-3-11-7z" />
      <path d="M190 637l12-13-4-1 21-5-9 13-3-2z" />
      <path d="M369 757l24 11 5-1 9 13-19 0 5-3z" />
    </Arrows>
    <Note $top={56} $left={130}>会话名称</Note>
    <Note $top={144} $left={17}>主机ip</Note>
    <Note $top={224} $left={39}>选择SFTP</Note>
    <Note $top={240} $left={375}>默认端口21</Note>
    <Watermark>https://blog.csdn.net/DengShengL</Watermark>
  </Dialog>
);

const App = () => (
  <>
    <GlobalStyle />
    <Desktop>
      <Backdrop>
        <BackdropBar>用</BackdropBar>
        <BackdropBody>
          <Beige />
          <Copyright>©1999-2019 北京创新乐知网络技术有限公司</Copyright>
          <Beige />
          <div />
          <Band />
          <BlankStrip />
          <GhostForm>
            <GhostLabel><Key text="方法" k="M" /></GhostLabel>
            <GhostSelect>Password</GhostSelect>
            <GhostInput />
          </GhostForm>
        </BackdropBody>
      </Backdrop>
      <Xftp />
      <Sessions />
      <Properties />
    </Desktop>
  </>
);

export default App;
